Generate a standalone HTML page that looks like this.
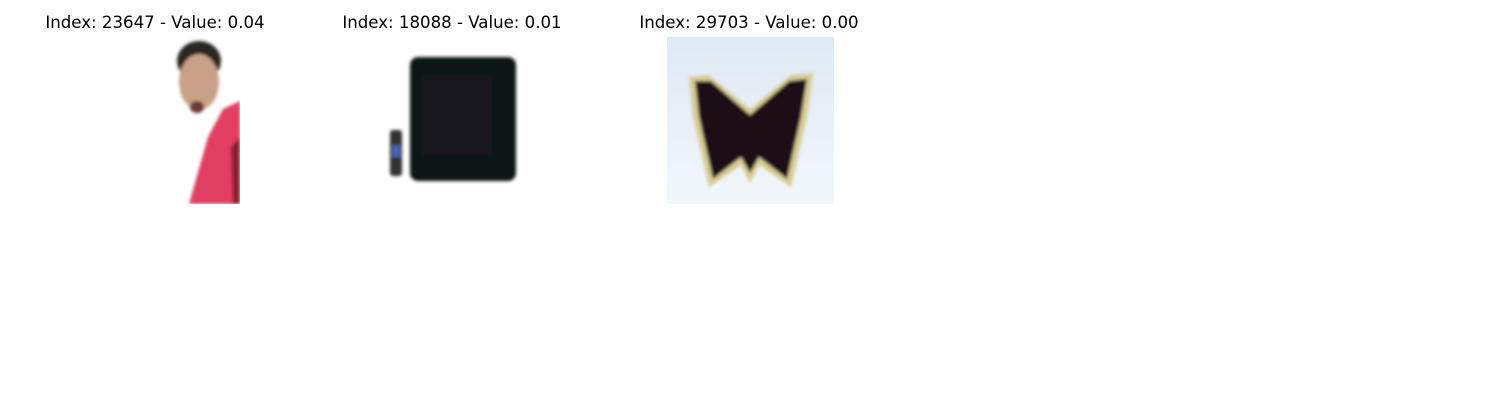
<!DOCTYPE html>
<html><head><style>
body{margin:0;width:1500px;height:400px;background:#fff;overflow:hidden;position:relative;font-family:"DejaVu Sans",sans-serif;}
.t{position:absolute;top:13px;font-size:16.6px;color:#000;width:300px;text-align:center;white-space:nowrap}
svg{position:absolute;top:37px}
</style></head><body>
<div class="t" style="left:5px">Index: 23647 - Value: 0.04</div>
<div class="t" style="left:302px">Index: 18088 - Value: 0.01</div>
<div class="t" style="left:599px">Index: 29703 - Value: 0.00</div>

<svg style="left:73px" width="167" height="167" viewBox="0 0 167 167">
<defs><filter id="b"><feGaussianBlur stdDeviation="1.5"/></filter></defs>
<rect width="167" height="167" fill="#fff"/>
<g filter="url(#b)">
<ellipse cx="126" cy="24" rx="22" ry="20" fill="#2b2622"/>
<ellipse cx="126" cy="45" rx="20" ry="28" fill="#c9a088"/>
<ellipse cx="124" cy="70" rx="7" ry="6" fill="#6a3a32"/>
<path d="M167 64 L150 72 L135 100 L116 167 L167 167Z" fill="#e23d62"/>
<path d="M158 110 L167 100 L167 167 L160 167Z" fill="#8a1e30"/>
</g></svg>

<svg style="left:370px" width="167" height="167" viewBox="0 0 167 167">
<rect width="167" height="167" fill="#fff"/>
<g filter="url(#b)">
<rect x="40" y="20" width="106" height="124" rx="8" fill="#111214"/>
<rect x="52" y="38" width="70" height="80" fill="#16181c"/>
<rect x="20" y="93" width="12" height="46" rx="3" fill="#333"/>
<rect x="22" y="108" width="8" height="12" fill="#4a63b0"/>
</g></svg>

<svg style="left:667px" width="167" height="167" viewBox="0 0 167 167">
<defs><linearGradient id="g" x1="0" y1="0" x2="0" y2="1"><stop offset="0" stop-color="#dfe9f4"/><stop offset="1" stop-color="#f2f7fb"/></linearGradient></defs>
<rect width="167" height="167" fill="url(#g)"/>
<g filter="url(#b)">
<path d="M22 40 L42 38 L83 72 L124 38 L146 36 L140 80 L124 150 L92 128 L83 146 L74 128 L42 150 L26 80Z" fill="#d8cc94"/>
<path d="M28 44 L44 44 L83 78 L122 44 L140 42 L134 80 L120 142 L92 120 L83 136 L74 120 L46 142 L32 80Z" fill="#1a1015"/>
</g></svg>
</body></html>
